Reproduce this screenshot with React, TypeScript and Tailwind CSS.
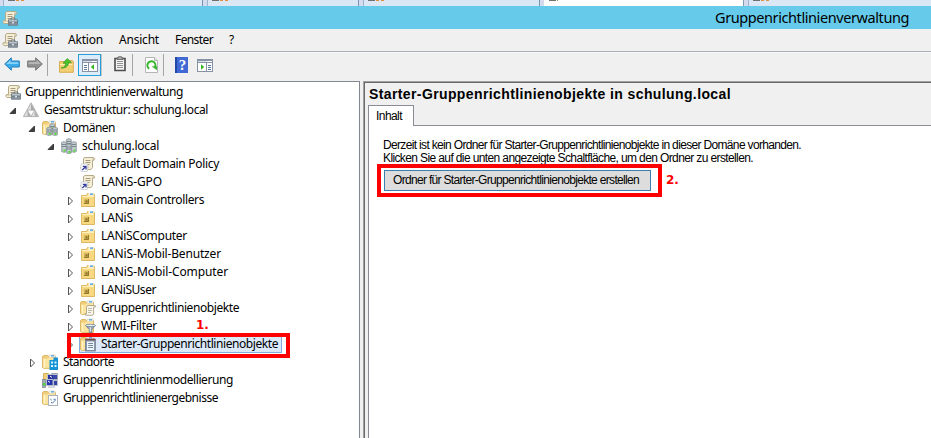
import { useLayoutEffect, useRef, useState } from "react";
import type { ReactNode } from "react";

const UI = "font-['Noto_Sans','Open_Sans',sans-serif]";
const SANS = "font-['Liberation_Sans',Arial,sans-serif]";

/** Single line label whose letter spacing is adjusted to fill a given width. */
function Label({ children, width, className = "" }: { children: string; width: number; className?: string }) {
  const ref = useRef<HTMLSpanElement>(null);
  const [spacing, setSpacing] = useState(0);
  useLayoutEffect(() => {
    const el = ref.current;
    if (!el) return;
    el.style.letterSpacing = "0px";
    const natural = el.getBoundingClientRect().width;
    const s = (width - natural) / children.length;
    el.style.letterSpacing = `${s}px`;
    setSpacing(s);
  }, [width, children]);
  return (
    <span ref={ref} className={`inline-block shrink-0 whitespace-pre ${className}`} style={{ letterSpacing: spacing }}>
      {children}
    </span>
  );
}

function Icon({ children, className = "" }: { children: ReactNode; className?: string }) {
  return (
    <svg viewBox="0 0 16 16" className={`h-4 w-4 shrink-0 ${className}`} fill="none">
      {children}
    </svg>
  );
}

const Scroll = () => (
  <>
    <path d="M4.5 1.5h9.2l1 1.2-.7 1.6h-1.5v7.2l-1.5 2H2.2L.7 12.2l.8-1.7h2V3z" fill="#f6efd8" stroke="#b5a988" />
    <path d="M12.5 1.7l2 1-.6 1.5h-1.6z" fill="#cfc4a4" />
    <path d="M5.5 4.5h5M5.5 6.5h5M5.5 8.5h4" stroke="#a79c80" />
    <path d="M1 11h8" stroke="#c6bb98" />
  </>
);

const Console = () => (
  <>
    <Scroll />
    <path d="M9.2 9.5V8h3.6v1.5" stroke="#66717b" />
    <rect x="6.5" y="9.8" width="9" height="5.4" fill="#8a97a3" stroke="#6b7781" strokeWidth=".8" />
    <path d="M7 10.7h8" stroke="#c3ccd4" />
    <path d="M7 12.7h8" stroke="#6b7781" strokeWidth=".8" />
    <rect x="10.2" y="11.8" width="1.6" height="1.6" fill="#eef2f5" />
  </>
);

const Folder = () => (
  <>
    <path d="M.5 2.5l1-1h4l1 1h7v11.8H1.5l-1-1z" fill="#f0cd78" stroke="#dcb868" />
    <rect x="7" y="1" width="6" height="2.5" fill="#f7fbfe" stroke="#c9bd98" strokeWidth=".5" />
    <rect x="9" y="1.2" width="3" height="1.3" fill="#4ba0de" />
    <path d="M1 4.5h4.5l1-1H13v10.3H2L1 13z" fill="#fbe3a0" />
    <path d="M2.5 5v9" stroke="#fff3c8" />
  </>
);

const Ou = () => (
  <>
    <path d="M1.5 3.5h5l1-2h6l1 1v12h-13z" fill="#f8d981" stroke="#dcb862" />
    <rect x="8.5" y="1.2" width="5" height="2.3" fill="#fff" />
    <rect x="10" y="1.5" width="3" height="1.3" fill="#3b98e0" />
    <path d="M2 4.5h12" stroke="#fff0bd" />
    <rect x="4" y="7" width="5" height="5" fill="#c9aa4c" />
    <path d="M4 12V7h5" stroke="#e2c76e" />
    <path d="M4 11.5h4.5V7" stroke="#94782c" />
    <rect x="5.5" y="8.5" width="2" height="2" fill="#8d7230" />
  </>
);

const Tower = ({ x, y, h }: { x: number; y: number; h: number }) => (
  <>
    <path d={`M${x} ${y + 1}l2.3-1 2.7 1v${h}l-2.3 1-2.7-1z`} fill="#b9c2c7" stroke="#7c888f" strokeWidth=".6" />
    <path d={`M${x + 2.7} ${y + 1.7}v${h - 1}`} stroke="#e0e6e8" strokeWidth=".8" />
    <path d={`M${x + 0.4} ${y + 3}h4.2M${x + 0.4} ${y + 5}h4.2`} stroke="#68757c" strokeWidth=".8" />
    <rect x={x + 2} y={y + h - 1} width="2" height="2" fill="#4ddb35" />
  </>
);

const icons: Record<string, ReactNode> = {
  console: <Console />,
  forest: (
    <>
      <path d="M8 .8L.4 14.6h15.2z" fill="#dedede" stroke="#a3a3a3" strokeWidth=".8" />
      <path d="M8 1.5v6.7h3.6z" fill="#a8a8a8" />
      <path d="M4.5 8.2v6h3.2zM11.7 8.2v6h3.2z" fill="#b0b0b0" />
      <path d="M4.4 8.2h7.2L8 14.3z" fill="#fff" stroke="#9c9c9c" strokeWidth=".6" />
    </>
  ),
  domains: (
    <>
      <Folder />
      <Tower x={7.8} y={3.5} h={5} />
      <Tower x={4.7} y={7} h={6.8} />
      <Tower x={10.5} y={7} h={6.8} />
    </>
  ),
  domain: (
    <>
      <Tower x={5.3} y={0.5} h={7} />
      <Tower x={0.4} y={3.5} h={9} />
      <Tower x={10.4} y={3.5} h={9} />
      <Tower x={5.4} y={6} h={8} />
    </>
  ),
  link: (
    <>
      <Scroll />
      <rect x="1" y="8" width="6.5" height="7.5" fill="#fff" stroke="#b8bcc8" strokeWidth=".6" />
      <path d="M2.3 14L5.5 10.8M2.8 10.3h3.2v3.2" stroke="#333d9b" strokeWidth="1.3" />
    </>
  ),
  ou: <Ou />,
  objects: (
    <>
      <Folder />
      <path d="M7.5 5.5h7.7l.3 1.5h-1.8v6.5l-1 1.8H5.5l-.5-1.6h1.5V7z" fill="#f9f6ec" stroke="#a39a82" strokeWidth=".8" />
      <path d="M8 8.5h4M8 10.5h4M8 12.5h3" stroke="#b1aa97" strokeWidth=".8" />
    </>
  ),
  filter: (
    <>
      <Folder />
      <path d="M5.5 7.5h10l-3.7 4v3.8l-2.5-.8v-3z" fill="#9baab8" stroke="#65788a" strokeWidth=".8" />
      <ellipse cx="10.5" cy="7.5" rx="5" ry="1.2" fill="#e7eef4" stroke="#65788a" strokeWidth=".7" />
      <path d="M10.3 9.3v4.4" stroke="#e4edf2" />
    </>
  ),
  starter: (
    <>
      <Folder />
      <rect x="5.5" y="3.5" width="9.8" height="11.5" fill="#8d9bb0" stroke="#6d7a8e" strokeWidth=".8" />
      <rect x="5.5" y="2.6" width="9.8" height="1.8" fill="#7c4c4c" />
      <rect x="7" y="5.5" width="7" height="8.5" fill="#eaf4fb" />
      <path d="M8.2 7.5H13M8.2 9.5H13M8.2 11.5H13" stroke="#79899b" />
    </>
  ),
  sites: (
    <>
      <Folder />
      <rect x="7.5" y="6" width="8.5" height="10" fill="#1593d5" />
      <rect x="11.5" y="3.5" width="4.5" height="5" fill="#1593d5" />
      <path d="M9 7.5h2v2H9zM12.5 7.5h2v2h-2zM9 11h2v2H9zM12.5 11h2v2h-2z" fill="#ddf5ff" />
    </>
  ),
  modeling: (
    <>
      <path d="M1.5 1.5h5v6h-5z" fill="#f3d17b" stroke="#d9b155" />
      <path d="M9.5 1.5h6v6h-6z" fill="#c8cfd6" stroke="#9ca5af" />
      <rect x="5.5" y="2.5" width="7" height="6" fill="#27329d" stroke="#b9c0ca" />
      <rect x="4.5" y="7.5" width="6.5" height="6" fill="#2634ab" stroke="#b7c0cb" />
      <rect x="11" y="3" width="4" height="4" fill="#3746a8" />
      <rect x="11.5" y="8.5" width="4" height="5" fill="#3442a8" stroke="#b7c0cb" />
      <path d="M6 15h7" stroke="#a9b1ba" />
      <path d="M8 4l2 1.5M6 9l2 1.5" stroke="#fff" />
      <rect x=".5" y="7.5" width="3" height="8" fill="#a3abb3" stroke="#767f88" strokeWidth=".7" />
      <rect x="1.2" y="11" width="2" height="2.5" fill="#3ddd31" />
    </>
  ),
  results: (
    <>
      <Folder />
      <rect x="6.5" y="5.5" width="9" height="10" fill="#fff" stroke="#aab1bc" />
      <path d="M8.3 9l1.5 1.2M9 12l1.3 1.3 3.3-3.3M11.5 9.3h2.3" stroke="#5177b1" />
    </>
  ),
};

type Item = { level: number; text: string; width: number; icon: string; state?: "open" | "closed"; selected?: boolean };

const items: Item[] = [
  { level: 0, text: "Gruppenrichtlinienverwaltung", width: 158, icon: "console" },
  { level: 1, text: "Gesamtstruktur: schulung.local", width: 164, icon: "forest", state: "open" },
  { level: 2, text: "Domänen", width: 52, icon: "domains", state: "open" },
  { level: 3, text: "schulung.local", width: 77, icon: "domain", state: "open" },
  { level: 4, text: "Default Domain Policy", width: 118, icon: "link" },
  { level: 4, text: "LANiS-GPO", width: 61, icon: "link" },
  { level: 4, text: "Domain Controllers", width: 103, icon: "ou", state: "closed" },
  { level: 4, text: "LANiS", width: 32, icon: "ou", state: "closed" },
  { level: 4, text: "LANiSComputer", width: 86, icon: "ou", state: "closed" },
  { level: 4, text: "LANiS-Mobil-Benutzer", width: 120, icon: "ou", state: "closed" },
  { level: 4, text: "LANiS-Mobil-Computer", width: 127, icon: "ou", state: "closed" },
  { level: 4, text: "LANiSUser", width: 55, icon: "ou", state: "closed" },
  { level: 4, text: "Gruppenrichtlinienobjekte", width: 138, icon: "objects", state: "closed" },
  { level: 4, text: "WMI-Filter", width: 56, icon: "filter", state: "closed" },
  { level: 4, text: "Starter-Gruppenrichtlinienobjekte", width: 177, icon: "starter", state: "closed", selected: true },
  { level: 2, text: "Standorte", width: 51, icon: "sites", state: "closed" },
  { level: 2, text: "Gruppenrichtlinienmodellierung", width: 170, icon: "modeling" },
  { level: 2, text: "Gruppenrichtlinienergebnisse", width: 155, icon: "results" },
];

const indent = ["pl-0", "pl-[8px]", "pl-[27px]", "pl-[46px]", "pl-[65px]"];

function Row({ item }: { item: Item }) {
  return (
    <div className={`flex h-[18px] shrink-0 items-center ${indent[item.level]}`}>
      {item.level > 0 && (
        <Icon className="-mr-1">
          {item.state === "open" && <path d="M7.5 6v5.5H2z" fill="#404040" stroke="#262626" strokeWidth=".8" />}
          {item.state === "closed" && <path d="M3.5 5v8l4-4z" fill="#fff" stroke="#555" />}
        </Icon>
      )}
      <div
        className={
          item.selected
            ? "ml-[2px] flex h-[18px] items-center border border-[#84acdd] bg-[#dce9fb] pr-[3px]"
            : `flex items-center ${item.level ? "pl-[3px]" : "pl-[5px]"}`
        }
      >
        <Icon>{icons[item.icon]}</Icon>
        <Label width={item.width} className={`text-[12px] leading-[18px] ${item.level || item.selected ? "ml-[5px]" : "ml-1"}`}>
          {item.text}
        </Label>
      </div>
    </div>
  );
}

function BrowserTab({ className, white }: { className: string; white?: boolean }) {
  return (
    <div className={`flex h-[6px] shrink-0 border-x ${white ? "border-white border-r-[#7f9db9] bg-white" : "border-l-[#9ab4d4] border-r-[#7596b2] bg-[#dbe7f5]"} ${className}`}>
      <div className="ml-1 h-px w-[7px] bg-[#707070]" />
      <div className={`ml-px h-px ${white ? "w-px bg-[#70a860]" : "w-[3px] bg-[#dc9040]"}`} />
      {!white && <div className="ml-[2px] h-px w-[3px] bg-[#dc9040]" />}
    </div>
  );
}

const Separator = ({ className }: { className: string }) => <div className={`h-[22px] w-px shrink-0 bg-[#a5a5a5] ${className}`} />;

const PaneIcon = ({ mirrored }: { mirrored?: boolean }) => (
  <>
    <rect x=".5" y="2.5" width="15" height="12" fill="#fff" stroke="#8793a4" />
    <path d="M1 3.5h14M1 5.5h14" stroke="#8793a4" />
    <path d="M1 4.5h9" stroke="#d9e0e8" />
    <path d="M11 4.5h1M13 4.5h1" stroke="#fff" />
    {mirrored ? (
      <>
        <path d="M9.5 6v8" stroke="#8793a4" />
        <path d="M11 8.5h3M11 10.5h3M11 12.5h3" stroke="#5c7896" />
        <path d="M4 7.3v5.4L7.2 10z" fill="#35b522" />
      </>
    ) : (
      <>
        <path d="M6.5 6v8" stroke="#8793a4" />
        <path d="M2 8.5h3M2 10.5h3M2 12.5h3" stroke="#5c7896" />
        <path d="M12 7.3v5.4L8.8 10z" fill="#35b522" />
      </>
    )}
  </>
);

function Toolbar() {
  return (
    <div className="flex h-[29px] shrink-0 items-start border-t border-[#f8f8f8] pt-px">
      <Icon className="mt-[2px] ml-1">
        <path d="M.7 8L7.3 1.8V5h8v6h-8v3.2z" fill="#3baceb" stroke="#257ebc" />
        <path d="M2.2 8l4.3-4v2.2h7.7V8" fill="#8bd2fa" />
      </Icon>
      <Icon className="mt-[2px] ml-[7px]">
        <path d="M15.3 8L8.7 1.8V5h-8v6h8v3.2z" fill="#929292" stroke="#747474" />
        <path d="M1.7 6h8V4l4.2 4H1.7z" fill="#b5b5b5" />
      </Icon>
      <Separator className="ml-1" />
      <Icon className="mt-[3px] ml-[10px]">
        <path d="M1.5 4.5h5l1.5-1h6.5l.8 1v10.8H1.5z" fill="#f3cf73" stroke="#d9ad52" />
        <path d="M2 7.5h12.5" stroke="#fff0b4" />
        <path d="M3 11c3.5-.5 4.5-2 4.5-4.8H5L9.3 1.5l4.2 4.2H10.5C10.5 9 7.500 11.500 3 11z" fill="#4cc32c" stroke="#359722" strokeWidth=".7" />
      </Icon>
      <div className="ml-1 flex h-[22px] w-[23px] shrink-0 items-center justify-center border border-[#26a0da] bg-[#dcecfa]">
        <Icon><PaneIcon /></Icon>
      </div>
      <Separator className="bg-[#c4c4c4]" />
      <Icon className="mt-[2px] ml-[10px]">
        <path d="M3 2.5h10v12H3z" fill="#f4f4f4" stroke="#4d4d4d" strokeWidth="1.6" />
        <path d="M5 3.5V1.7h1.500V.7h3v1h1.500v1.8z" fill="#ababab" stroke="#5a5a5a" strokeWidth=".8" />
        <path d="M5 5.500h6M5 7.500h6M5 9.500h6M5 11.500h6" stroke="#929292" />
      </Icon>
      <Separator className="ml-1" />
      <Icon className="mt-[3px] ml-[11px]">
        <path d="M1.5.5h9l3 3v12h-12z" fill="#fff" stroke="#b5b5b5" />
        <path d="M10.5.5v3h3" fill="#e8e8e8" stroke="#b5b5b5" />
        <path d="M5.2 11.6A4 4 0 1 1 11 10" stroke="#35b72c" strokeWidth="2" />
        <path d="M7.5 9.3h5.5v4z" fill="#35b72c" />
      </Icon>
      <Separator className="ml-[3px]" />
      <div className="mt-[3px] ml-[11px] flex h-4 w-[13px] shrink-0 items-center justify-center border-l-2 border-[#2148a6] bg-[#4169d4] font-['Liberation_Serif',serif] text-[15px] leading-4 font-bold text-white">
        ?
      </div>
      <Icon className="mt-[3px] ml-[9px]"><PaneIcon mirrored /></Icon>
    </div>
  );
}

export default function App() {
  return (
    <div className={`relative flex h-[438px] w-[931px] flex-col overflow-hidden bg-[#f0f0f0] text-black ${UI}`}>
      <div className="flex h-[6px] shrink-0 overflow-hidden bg-[#d5dbec]">
        <BrowserTab className="ml-[3px] w-[200px]" />
        <BrowserTab className="ml-1 w-[152px]" />
        <BrowserTab className="ml-1 w-[177px]" />
        <BrowserTab white className="ml-1 w-[200px]" />
        <BrowserTab className="ml-1 w-[200px]" />
      </div>

      <header className="flex h-[23px] shrink-0 items-center bg-[#66caea] pl-[2px]">
        <Icon><Console /></Icon>
        <Label width={194} className="ml-[697px] text-[14.5px] leading-[23px]">Gruppenrichtlinienverwaltung</Label>
      </header>

      <nav className="flex h-[23px] shrink-0 items-center border-b border-[#abafba] pl-[2px] text-[12px] leading-[22px]">
        <Icon><Console /></Icon>
        <Label width={27} className="ml-[7px]">Datei</Label>
        <Label width={35} className="ml-4">Aktion</Label>
        <Label width={40} className="ml-4">Ansicht</Label>
        <Label width={38} className="ml-4">Fenster</Label>
        <Label width={6} className="ml-4">?</Label>
      </nav>

      <Toolbar />

      <main className="flex min-h-0 flex-1">
        <aside className="flex w-[360px] shrink-0 flex-col border-t border-r border-[#828790] bg-white pt-px">
          {items.map((item) => (
            <Row key={item.text} item={item} />
          ))}
        </aside>

        <div className="ml-[3px] flex min-w-0 flex-1 border-t border-l border-[#a0a0a0]">
          <section className="flex min-w-0 flex-1 flex-col border-t border-l border-[#696969] pl-[3px]">
            <h1 className={`flex h-[22px] shrink-0 items-center pt-px pl-px text-[14px] font-bold ${SANS}`}>
              <Label width={362}>Starter-Gruppenrichtlinienobjekte in schulung.local</Label>
            </h1>
            <div className={`flex h-[21px] shrink-0 text-[12px] ${SANS}`}>
              <div className="flex w-[46px] items-center border-x border-t border-[#898c95] bg-white pb-px pl-[7px]">
                <Label width={26}>Inhalt</Label>
              </div>
              <div className="flex-1 border-b border-[#898c95]" />
            </div>
            <div className={`flex flex-1 flex-col items-start border-l border-[#898c95] bg-white pt-[13px] pl-[14px] text-[12px] leading-[13px] ${SANS}`}>
              <Label width={418}>Derzeit ist kein Ordner für Starter-Gruppenrichtlinienobjekte in dieser Domäne vorhanden.</Label>
              <Label width={370}>Klicken Sie auf die unten angezeigte Schaltfläche, um den Ordner zu erstellen.</Label>
              <button className="mt-[5px] ml-[1px] flex h-[21px] w-[267px] items-center border border-[#3c7fb1] bg-[#dddddd] pl-2">
                <Label width={246}>Ordner für Starter-Gruppenrichtlinienobjekte erstellen</Label>
              </button>
            </div>
          </section>
        </div>
      </main>

      {/* Step markers drawn over the window */}
      <div className="absolute top-[333px] left-[67px] h-[25px] w-[223px] border-4 border-[#fe0000]" />
      <div className="absolute top-[164px] left-[377px] h-[33px] w-[285px] border-4 border-[#fe0000]" />
      <div className="absolute top-[317px] left-[196px] font-['DejaVu_Sans',sans-serif] text-[12px] leading-4 font-bold text-[#fe0000]">1.</div>
      <div className="absolute top-[172px] left-[666px] font-['DejaVu_Sans',sans-serif] text-[12px] leading-4 font-bold text-[#fe0000]">2.</div>
    </div>
  );
}
